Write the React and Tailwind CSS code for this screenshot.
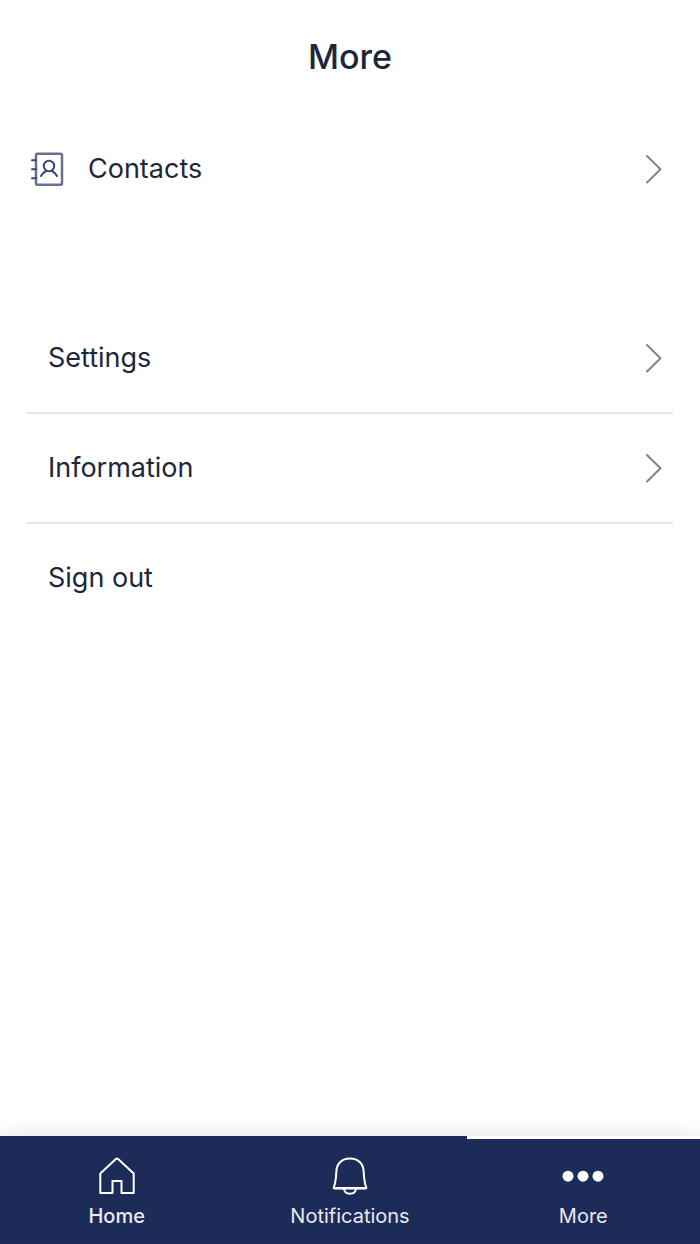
const menuItems = [
  { label: "Settings", href: "#settings" },
  { label: "Information", href: "#information" },
];

const tabs = [
  { label: "Home", href: "#home", icon: HomeIcon, weight: "font-medium" },
  { label: "Notifications", href: "#notifications", icon: BellIcon, weight: "font-normal" },
  { label: "More", href: "#more", icon: DotsIcon, weight: "font-normal", active: true },
];

function ContactsIcon() {
  return (
    <svg width="36" height="40" viewBox="0 0 36 40" fill="none" stroke="#3a4673" strokeWidth="2" strokeLinecap="round" aria-hidden="true">
      <rect x="5" y="4.700" width="26" height="31" rx="1.5" stroke="#68708f" strokeWidth="2.500" />
      <path d="M1 11.200h4M1 20.200h4M1 29.200h4" />
      <circle cx="18" cy="17" r="5.200" />
      <path d="M10 27c1-2.300 3-4 5.200-5M26 27c-1-2.300-3-4-5.200-5" />
    </svg>
  );
}

function ChevronIcon() {
  return (
    <svg width="18" height="30" viewBox="0 0 18 30" fill="none" stroke="#7d8494" strokeWidth="2" strokeLinecap="round" strokeLinejoin="round" aria-hidden="true">
      <path d="M2 2l13.500 13.200L2 28.500" />
    </svg>
  );
}

function HomeIcon() {
  return (
    <svg width="40" height="40" viewBox="0 0 40 40" fill="none" stroke="currentColor" strokeWidth="2" strokeLinejoin="round" aria-hidden="true">
      <path d="M3.300 38V18.500L18.900 4q1.100-1 2.200 0L36.700 18.500V38H24.500V26h-9V38z" />
    </svg>
  );
}

function BellIcon() {
  return (
    <svg width="40" height="40" viewBox="0 0 40 40" fill="none" stroke="currentColor" strokeWidth="2" strokeLinejoin="round" aria-hidden="true">
      <path d="M20 3.500C11.500 3.500 6.500 9 6.300 17c-.2 6.500-.5 10-2.700 16h32.800C34.200 27 33.900 23.500 33.700 17 33.500 9 28.500 3.500 20 3.500z" />
      <path d="M4 33.300h32" strokeWidth="2.500" />
      <path d="M14 33.500c.3 3.500 2.700 5.300 6 5.300s5.700-1.800 6-5.300" />
    </svg>
  );
}

function DotsIcon() {
  return (
    <svg width="42" height="40" viewBox="0 0 42 40" fill="currentColor" aria-hidden="true">
      <circle cx="6" cy="21.200" r="5.500" />
      <circle cx="21" cy="21.200" r="5.500" />
      <circle cx="36" cy="21.200" r="5.500" />
    </svg>
  );
}

export default function App() {
  return (
    <div className="flex min-h-screen flex-col bg-white font-['Inter',sans-serif] text-[#1d273b]">
      {/* Header */}
      <header className="flex h-[114px] items-center justify-center">
        <h1 className="text-[34px] leading-10 font-medium">More</h1>
      </header>

      <main className="flex-1 px-[27px] text-[27px] leading-8">
        <a href="#contacts" className="flex h-[110px] items-center pr-2.5 pl-1">
          <ContactsIcon />
          <span className="ml-[21px] flex-1">Contacts</span>
          <ChevronIcon />
        </a>

        {/* Account menu */}
        <nav className="mt-20">
          {menuItems.map((item) => (
            <a key={item.label} href={item.href} className="flex h-[110px] items-center justify-between border-b-2 border-[#e6e8ec] pr-2.5 pl-[21px]">
              {item.label}
              <ChevronIcon />
            </a>
          ))}
          <button type="button" className="flex h-[108px] w-full items-center pl-[21px] text-left">
            Sign out
          </button>
        </nav>
      </main>

      {/* Tab bar */}
      <nav className="grid grid-cols-3 bg-[#1d2b58] text-white shadow-[0_0_20px_rgba(0,0,0,0.12)]">
        {tabs.map(({ label, href, icon: Icon, weight, active }) => (
          <a
            key={label}
            href={href}
            aria-current={active ? "page" : undefined}
            className={`flex h-[108px] flex-col items-center border-t-3 pt-4 ${active ? "border-white" : "border-transparent"}`}
          >
            <Icon />
            <span className={`mt-[9px] text-xl leading-6 text-[#e8eaf0] ${weight}`}>{label}</span>
          </a>
        ))}
      </nav>
    </div>
  );
}
